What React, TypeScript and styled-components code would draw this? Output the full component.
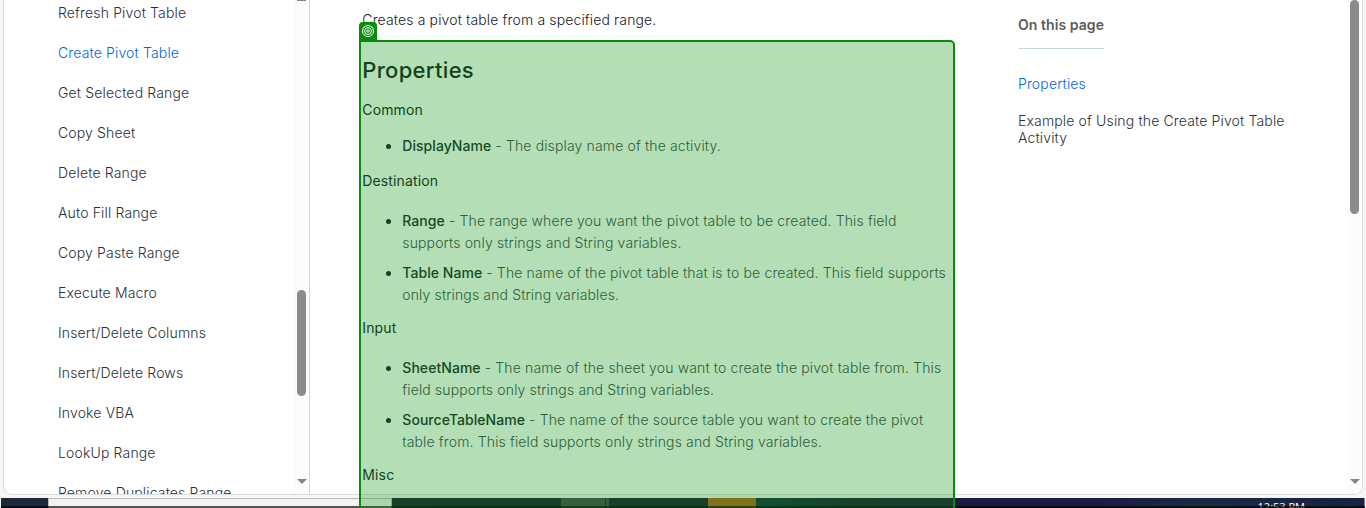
import React from 'react';
import styled, { createGlobalStyle } from 'styled-components';

const GlobalStyle = createGlobalStyle`
  * { box-sizing: border-box; }
  html, body { margin: 0; padding: 0; overflow: hidden; background: #f5f5f5; }
  body, button { font-family: Inter, "Liberation Sans", sans-serif; }
`;

const Screen = styled.div`
  position: relative;
  width: 1366px;
  height: 508px;
  overflow: hidden;
  display: flex;
  flex-direction: column;
  background: #f6f6f6;
`;

const Window = styled.div`
  display: flex;
  flex: none;
  height: 495px;
  margin: 0 3px 3px;
  background: #fff;
  border: 1px solid #dcdcdc;
  border-top: 0;
  border-radius: 0 0 9px 9px;
  overflow: hidden;
`;

const Sidebar = styled.nav`
  display: flex;
  justify-content: space-between;
  width: 306px;
  flex: none;
  border-right: 1px solid #ccd6da;
`;

const NavList = styled.ul`
  list-style: none;
  margin: -7px 0 0;
  padding: 0 0 0 54px;
`;

const NavItem = styled.li<{ $active?: boolean }>`
  height: 40px;
  line-height: 40px;
  font-size: 14px;
  font-weight: 300;
  letter-spacing: 0.15px;
  white-space: nowrap;
  color: ${(p) => (p.$active ? '#0067df' : '#273139')};
`;

const Gutter = styled.div`
  position: relative;
  width: 15px;
  flex: none;
  background: #fcfcfc;
`;

const Thumb = styled.div<{ $top: number; $height: number }>`
  position: absolute;
  left: 3px;
  width: 9px;
  top: ${(p) => p.$top}px;
  height: ${(p) => p.$height}px;
  border-radius: 5px;
  background: #8b8b8b;
`;

const DownArrow = styled.div`
  position: absolute;
  left: 3px;
  top: 479px;
  border: 5px solid transparent;
  border-top-color: #858585;
  border-bottom: 0;
`;

const UpArrowBase = styled.div`
  position: absolute;
  left: 3px;
  top: 0;
  width: 9px;
  height: 1px;
  background: #858585;
`;

const Article = styled.main`
  width: 589.7px;
  flex: none;
  margin-left: 52.3px;
  padding-top: 9px;
  font-size: 14px;
  line-height: 22px;
  letter-spacing: 0.14px;
  color: #182027;
  white-space: nowrap;
`;

const Paragraph = styled.p<{ $light?: boolean }>`
  margin: 0;
  font-weight: ${(p) => (p.$light ? 300 : 400)};
`;

const Heading = styled.h2`
  margin: 24px 0 14px;
  font-size: 22px;
  line-height: 30px;
  font-weight: 500;
  letter-spacing: 0.3px;
`;

const PropertyList = styled.ul<{ $before: number; $after: number }>`
  margin: ${(p) => p.$before}px 0 ${(p) => p.$after}px;
  padding-left: 40px;
`;

const Property = styled.li`
  font-weight: 300;
  color: #3f4951;
  &::marker { color: #182027; }
  & + & { margin-top: 8px; }
  strong { font-weight: 500; letter-spacing: 0.05px; color: #202a31; }
`;

const Contents = styled.aside`
  flex: 1;
  margin-left: 66px;
  padding-top: 15px;
`;

const ContentsTitle = styled.div`
  width: 86px;
  height: 34px;
  font-size: 14px;
  line-height: 20px;
  font-weight: 600;
  letter-spacing: 0.07px;
  color: #5c5c5c;
  white-space: nowrap;
  border-bottom: 1px solid #c8d6e2;
`;

const ContentsLink = styled.div<{ $active?: boolean; $gap: number }>`
  margin-top: ${(p) => p.$gap}px;
  font-size: 14px;
  font-weight: 300;
  line-height: 17px;
  letter-spacing: 0.15px;
  white-space: nowrap;
  color: ${(p) => (p.$active ? '#0067df' : '#273139')};
`;

const Taskbar = styled.footer`
  position: relative;
  display: flex;
  flex: none;
  height: 10px;
  margin: 0 1px;
  overflow: hidden;
  background: linear-gradient(90deg, #1c293b 0, #1e1e36 450px, #1e1e36 720px, #193440 760px, #1e1f38 850px, #1d1c3f 954px, #1e1a40 1090px, #1b2945 1190px, #182440 100%);
`;

const TaskbarShade = styled.div`
  position: absolute;
  left: 0;
  right: 0;
  bottom: 0;
  height: 2px;
  background: rgba(0, 0, 0, 0.65);
`;

const StartArea = styled.div`
  width: 47px;
`;

const SearchBox = styled.div`
  width: 344px;
  background: #f2f2f2;
  border: 1px solid #b9b9b9;
  border-bottom: 0;
`;

const TaskButton = styled.div<{ $gap: number; $width: number; $tone: string }>`
  margin-left: ${(p) => p.$gap}px;
  width: ${(p) => p.$width}px;
  background: ${(p) => p.$tone};
`;

const Clock = styled.div`
  margin-left: auto;
  margin-right: 59px;
  padding-top: 3px;
  font: 11px/12px "Open Sans", sans-serif;
  color: #fff;
`;

const DesktopEdge = styled.div`
  width: 1px;
  background: #7b8190;
`;

const Highlight = styled.div`
  position: absolute;
  left: 359px;
  top: 40px;
  width: 596px;
  height: 476px;
  border: 2px solid #078c0b;
  border-radius: 0 5px 0 0;
  background: rgba(5, 145, 10, 0.3);
  background-clip: padding-box;
`;

const TargetBadge = styled.div`
  position: absolute;
  left: 359px;
  top: 22px;
  width: 18px;
  height: 19px;
  padding: 3px;
  border-radius: 4px 4px 0 0;
  background: #078c0b;
  svg { display: block; }
`;

interface Entry { name: string; lines: string[] }

const navigation = [
  'Refresh Pivot Table', 'Create Pivot Table', 'Get Selected Range', 'Copy Sheet',
  'Delete Range', 'Auto Fill Range', 'Copy Paste Range', 'Execute Macro',
  'Insert/Delete Columns', 'Insert/Delete Rows', 'Invoke VBA', 'LookUp Range',
  'Remove Duplicates Range',
];

const sections: { title: string; before: number; after: number; entries: Entry[] }[] = [
  {
    title: 'Common', before: 14, after: 13,
    entries: [{ name: 'DisplayName', lines: ['The display name of the activity.'] }],
  },
  {
    title: 'Destination', before: 18, after: 11,
    entries: [
      { name: 'Range', lines: ['The range where you want the pivot table to be created. This field', 'supports only strings and String variables.'] },
      { name: 'Table Name', lines: ['The name of the pivot table that is to be created. This field supports', 'only strings and String variables.'] },
    ],
  },
  {
    title: 'Input', before: 18, after: 11,
    entries: [
      { name: 'SheetName', lines: ['The name of the sheet you want to create the pivot table from. This', 'field supports only strings and String variables.'] },
      { name: 'SourceTableName', lines: ['The name of the source table you want to create the pivot', 'table from. This field supports only strings and String variables.'] },
    ],
  },
];

export default function App() {
  return (
    <>
      <GlobalStyle />
      <Screen>
        <Window>
          <Sidebar>
            <NavList>
              {navigation.map((label) => (
                <NavItem key={label} $active={label === 'Create Pivot Table'}>{label}</NavItem>
              ))}
            </NavList>
            <Gutter>
              <UpArrowBase />
              <Thumb $top={290} $height={106} />
              <DownArrow />
            </Gutter>
          </Sidebar>
          <Article>
            <Paragraph $light>Creates a pivot table from a specified range.</Paragraph>
            <Heading>Properties</Heading>
            {sections.map((s) => (
              <React.Fragment key={s.title}>
                <Paragraph>{s.title}</Paragraph>
                <PropertyList $before={s.before} $after={s.after}>
                  {s.entries.map((e) => (
                    <Property key={e.name}>
                      <strong>{e.name}</strong> - {e.lines.map((line, i) => (
                        <React.Fragment key={line}>{i > 0 && <br />}{line}</React.Fragment>
                      ))}
                    </Property>
                  ))}
                </PropertyList>
              </React.Fragment>
            ))}
            <Paragraph>Misc</Paragraph>
          </Article>
          <Contents>
            <ContentsTitle>On this page</ContentsTitle>
            <ContentsLink $active $gap={26}>Properties</ContentsLink>
            <ContentsLink $gap={20}>Example of Using the Create Pivot Table<br />Activity</ContentsLink>
          </Contents>
          <Gutter>
            <Thumb $top={0} $height={214} />
            <DownArrow />
          </Gutter>
        </Window>
        <Taskbar>
          <StartArea />
          <SearchBox />
          <TaskButton $gap={169} $width={44} $tone="#4b4c5a" />
          <TaskButton $gap={1} $width={3} $tone="#4b4c5a" />
          <TaskButton $gap={99} $width={48} $tone="#b56425" />
          <Clock>12:53 PM</Clock>
          <DesktopEdge />
          <TaskbarShade />
        </Taskbar>
        <Highlight />
        <TargetBadge>
          <svg width="12" height="12" viewBox="0 0 12 12" fill="none" stroke="#fff" strokeWidth="1">
            <circle cx="6" cy="6" r="5.5" />
            <circle cx="6" cy="6" r="3.4" />
            <circle cx="6" cy="6" r="1.2" />
          </svg>
        </TargetBadge>
      </Screen>
    </>
  );
}
